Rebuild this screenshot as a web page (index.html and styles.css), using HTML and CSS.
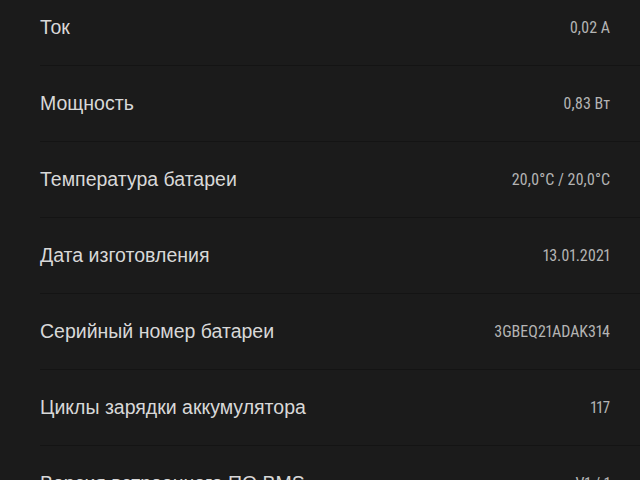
FILE: index.html
```html
<!DOCTYPE html>
<html lang="ru">
<head>
    <meta charset="UTF-8">
    <title>Информация о батарее</title>
    <link rel="stylesheet" href="styles.css">
</head>
<body>
<div class="list">
    <div class="row"><span class="label">Ток</span><span class="value">0,02 A</span></div>
    <div class="row"><span class="label">Мощность</span><span class="value">0,83 Вт</span></div>
    <div class="row"><span class="label">Температура батареи</span><span class="value">20,0°C / 20,0°C</span></div>
    <div class="row"><span class="label">Дата изготовления</span><span class="value">13.01.2021</span></div>
    <div class="row"><span class="label">Серийный номер батареи</span><span class="value">3GBEQ21ADAK314</span></div>
    <div class="row"><span class="label">Циклы зарядки аккумулятора</span><span class="value">117</span></div>
    <div class="row"><span class="label">Версия встроенного ПО BMS</span><span class="value">V1 / 1</span></div>
</div>
</body>
</html>
```

FILE: styles.css
```css
html, body {
    margin: 0;
    background: #1b1b1b;
    overflow: hidden;
}

.list {
    margin-top: -10px;
}

.row {
    display: flex;
    align-items: center;
    justify-content: space-between;
    height: 75px;
    margin-left: 40px;
    padding-right: 30px;
    border-bottom: 1px solid #141414;
}

.label {
    font-family: "Liberation Sans", Arial, sans-serif;
    font-size: 19.5px;
    color: #d8d8d8;
}

.value {
    font-family: Roboto, "Liberation Sans", sans-serif;
    font-size: 16px;
    font-stretch: condensed;
    font-variant-numeric: proportional-nums;
    color: #b4b4b4;
}
```
